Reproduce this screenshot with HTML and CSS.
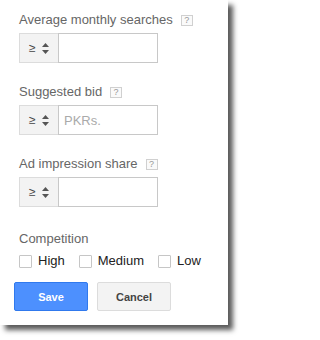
FILE: index.html
```html
<!DOCTYPE html>
<html>
<head>
<meta charset="utf-8">
<link rel="stylesheet" href="styles.css">
</head>
<body>
<div class="panel">
  <div class="fields">
    <div class="field">
      <div class="label">Average monthly searches <span class="help">?</span></div>
      <div class="group">
        <div class="op"><span class="ge">≥</span><svg class="spin" width="7" height="11" viewBox="0 0 7 11"><path d="M3.5 0 L7 4 L0 4 Z M0 7 L7 7 L3.5 11 Z" fill="#555"/></svg></div>
        <div class="input"></div>
      </div>
    </div>
    <div class="field">
      <div class="label">Suggested bid <span class="help">?</span></div>
      <div class="group">
        <div class="op"><span class="ge">≥</span><svg class="spin" width="7" height="11" viewBox="0 0 7 11"><path d="M3.5 0 L7 4 L0 4 Z M0 7 L7 7 L3.5 11 Z" fill="#555"/></svg></div>
        <div class="input"><span class="ph">PKRs.</span></div>
      </div>
    </div>
    <div class="field">
      <div class="label">Ad impression share <span class="help">?</span></div>
      <div class="group">
        <div class="op"><span class="ge">≥</span><svg class="spin" width="7" height="11" viewBox="0 0 7 11"><path d="M3.5 0 L7 4 L0 4 Z M0 7 L7 7 L3.5 11 Z" fill="#555"/></svg></div>
        <div class="input"></div>
      </div>
    </div>
    <div class="field comp">
      <div class="label">Competition</div>
      <div class="checks">
        <span class="check"><span class="box"></span>High</span>
        <span class="check"><span class="box"></span>Medium</span>
        <span class="check"><span class="box"></span>Low</span>
      </div>
    </div>
  </div>
  <div class="buttons">
    <div class="btn save">Save</div>
    <div class="btn cancel">Cancel</div>
  </div>
</div>
</body>
</html>
```
FILE: styles.css
```css
html, body {
  margin: 0;
  padding: 0;
  background: #fff;
}
body {
  width: 243px;
  height: 340px;
  overflow: hidden;
  font-family: "Liberation Sans", Arial, sans-serif;
}
.panel {
  width: 228px;
  height: 325px;
  box-sizing: border-box;
  background: #fff;
  box-shadow: 5px 5px 5px rgba(0,0,0,0.65);
  padding: 12px 14px 0;
}
.fields {
  padding-left: 5px;
}
.field {
  margin-bottom: 21px;
}
.label {
  font-size: 13px;
  line-height: 16px;
  color: #666;
  display: flex;
  align-items: center;
}
.help {
  display: inline-flex;
  align-items: center;
  justify-content: center;
  box-sizing: border-box;
  width: 12px;
  height: 11px;
  margin-left: 8px;
  margin-top: 1px;
  border: 1px solid #d0d0d0;
  background: #fafafa;
  font-size: 9px;
  line-height: 9px;
  color: #999;
}
.group {
  display: flex;
  margin-top: 5px;
  height: 30px;
}
.op {
  box-sizing: border-box;
  width: 39px;
  height: 30px;
  background: #f3f3f3;
  border: 1px solid #dcdcdc;
  border-right: none;
  display: flex;
  align-items: center;
  padding-left: 9px;
  gap: 6px;
}
.ge {
  font-size: 12px;
  color: #444;
  line-height: 12px;
}
.input {
  box-sizing: border-box;
  width: 100px;
  height: 30px;
  border: 1px solid #c8c8c8;
  background: #fff;
  display: flex;
  align-items: center;
  padding-left: 5px;
}
.ph {
  font-size: 13px;
  color: #aaa;
}
.comp {
  margin-top: 24px;
  margin-bottom: 0;
}
.checks {
  display: flex;
  margin-top: 6px;
  font-size: 13px;
  line-height: 16px;
  color: #222;
}
.check {
  display: flex;
  align-items: center;
  margin-right: 14px;
}
.box {
  box-sizing: border-box;
  width: 13px;
  height: 13px;
  border: 1px solid #c6c6c6;
  border-radius: 1px;
  background: #fff;
  margin-right: 6px;
}
.buttons {
  display: flex;
  gap: 9px;
  margin-top: 13px;
}
.btn {
  box-sizing: border-box;
  width: 74px;
  height: 29px;
  border-radius: 2px;
  font-size: 11px;
  font-weight: bold;
  display: flex;
  align-items: center;
  justify-content: center;
}
.save {
  background: #4d90fe;
  border: 1px solid #3079ed;
  color: #fff;
}
.cancel {
  background: #f3f3f3;
  border: 1px solid #dcdcdc;
  color: #444;
}
```
